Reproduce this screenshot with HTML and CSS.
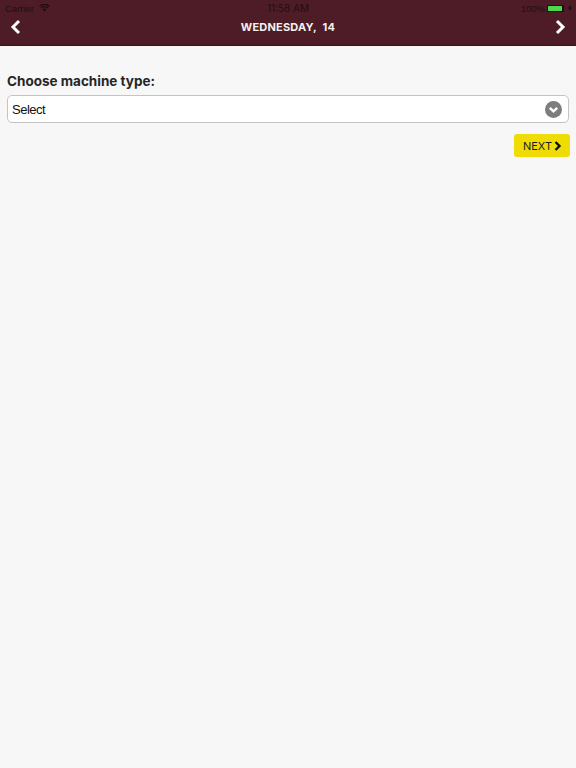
FILE: index.html
```html
<!DOCTYPE html>
<html lang="en">
<head>
<meta charset="utf-8">
<title>Choose machine type</title>
<link rel="stylesheet" href="styles.css">
</head>
<body>
<header class="top">
  <div class="status">
    <div class="status-left">
      <span>Carrier</span>
      <svg class="wifi" width="11" height="8" viewBox="0 0 12 9"><path d="M6 8.600 3.900 6.300a3 3 0 0 1 4.200 0zM2.900 5.200 1.700 3.900a6.200 6.200 0 0 1 8.600 0L9.100 5.200a4.500 4.500 0 0 0-6.200 0zM.9 3.100 0 2.100a8.700 8.700 0 0 1 12 0l-.9 1a7.400 7.400 0 0 0-10.200 0z"/></svg>
    </div>
    <span class="clock">11:58 AM</span>
    <div class="status-right">
      <span>100%</span>
      <span class="battery"><span class="battery-fill"></span></span>
      <svg class="bolt" width="4" height="6" viewBox="0 0 4 6"><path d="M2.300 0 0 3.400h1.500L1.200 6 4 2.500H2.300z"/></svg>
    </div>
  </div>
  <nav class="nav">
    <svg class="chev" width="11" height="16" viewBox="0 0 11 16"><path d="M9 2 3 8l6 6"/></svg>
    <h1 class="date">WEDNESDAY,&nbsp; 14</h1>
    <svg class="chev" width="11" height="16" viewBox="0 0 11 16"><path d="M2 2l6 6-6 6"/></svg>
  </nav>
</header>
<main class="content">
  <label class="label">Choose machine type:</label>
  <div class="select">
    <span>Select</span>
    <svg width="17" height="17" viewBox="0 0 17 17"><circle cx="8.500" cy="8.500" r="8.500" fill="#7d7d7d"/><path d="M4.800 6.800 8.500 10.400 12.200 6.800" fill="none" stroke="#fff" stroke-width="2.400"/></svg>
  </div>
  <div class="actions">
    <button class="next">NEXT<svg width="8" height="10" viewBox="0 0 8 10"><path d="M1.500 1 5.500 5l-4 4" fill="none" stroke="#111" stroke-width="2.400"/></svg></button>
  </div>
</main>
</body>
</html>
```
FILE: styles.css
```css
* { box-sizing: border-box; }
html, body { margin: 0; height: 100%; }
body { background: #f7f7f7; font-family: "Liberation Sans", Arial, sans-serif; color: #111; }
.top { height: 46px; background: #4d1c26; border-bottom: 1px solid #3f1019; }
.status { height: 16px; padding: 0 4px 0 5px; display: flex; align-items: center; justify-content: space-between; font-size: 9.500px; color: #1e1013; position: relative; }
.status-left, .status-right { display: flex; align-items: center; gap: 5px; }
.status-right { gap: 2px; }
.wifi { fill: #1a0e11; }
.clock { position: absolute; left: 0; right: 0; text-align: center; font-family: "Inter", sans-serif; font-size: 10px; }
.battery { width: 17px; height: 7px; background: #1e1013; padding: 1px 2px 1px 1px; display: flex; border-radius: 1px; margin-right: 2px; }
.battery-fill { flex: 1; background: #4cd84c; }
.bolt { fill: #1a0e11; }
.nav { height: 22px; padding: 0 10px; display: flex; align-items: center; justify-content: space-between; }
.chev { fill: none; stroke: #fff; stroke-width: 3; }
.date { margin: 0; font-family: "Inter", sans-serif; font-size: 11px; font-weight: 700; color: #f4f0f0; letter-spacing: .2px; }
.content { padding: 27px 6px 0 7px; }
.label { display: block; font-family: "Inter", sans-serif; font-size: 13.500px; font-weight: 700; color: #262626; line-height: 17px; }
.select { margin-top: 5px; height: 28px; background: #fff; border: 1px solid #c4c4c4; border-radius: 5px; padding: 0 6px 0 4px; display: flex; align-items: center; justify-content: space-between; font-size: 13px; letter-spacing: -.5px; color: #111; margin-right: 1px; }
.actions { margin-top: 11px; display: flex; justify-content: flex-end; }
.next { width: 56px; height: 23px; background: #f0dc05; border: 0; border-radius: 3px; padding: 0 0 0 1px; display: flex; align-items: center; justify-content: center; gap: 2px; font-family: "Inter", sans-serif; font-size: 11px; font-weight: 400; color: #1c1c1c; }
```
